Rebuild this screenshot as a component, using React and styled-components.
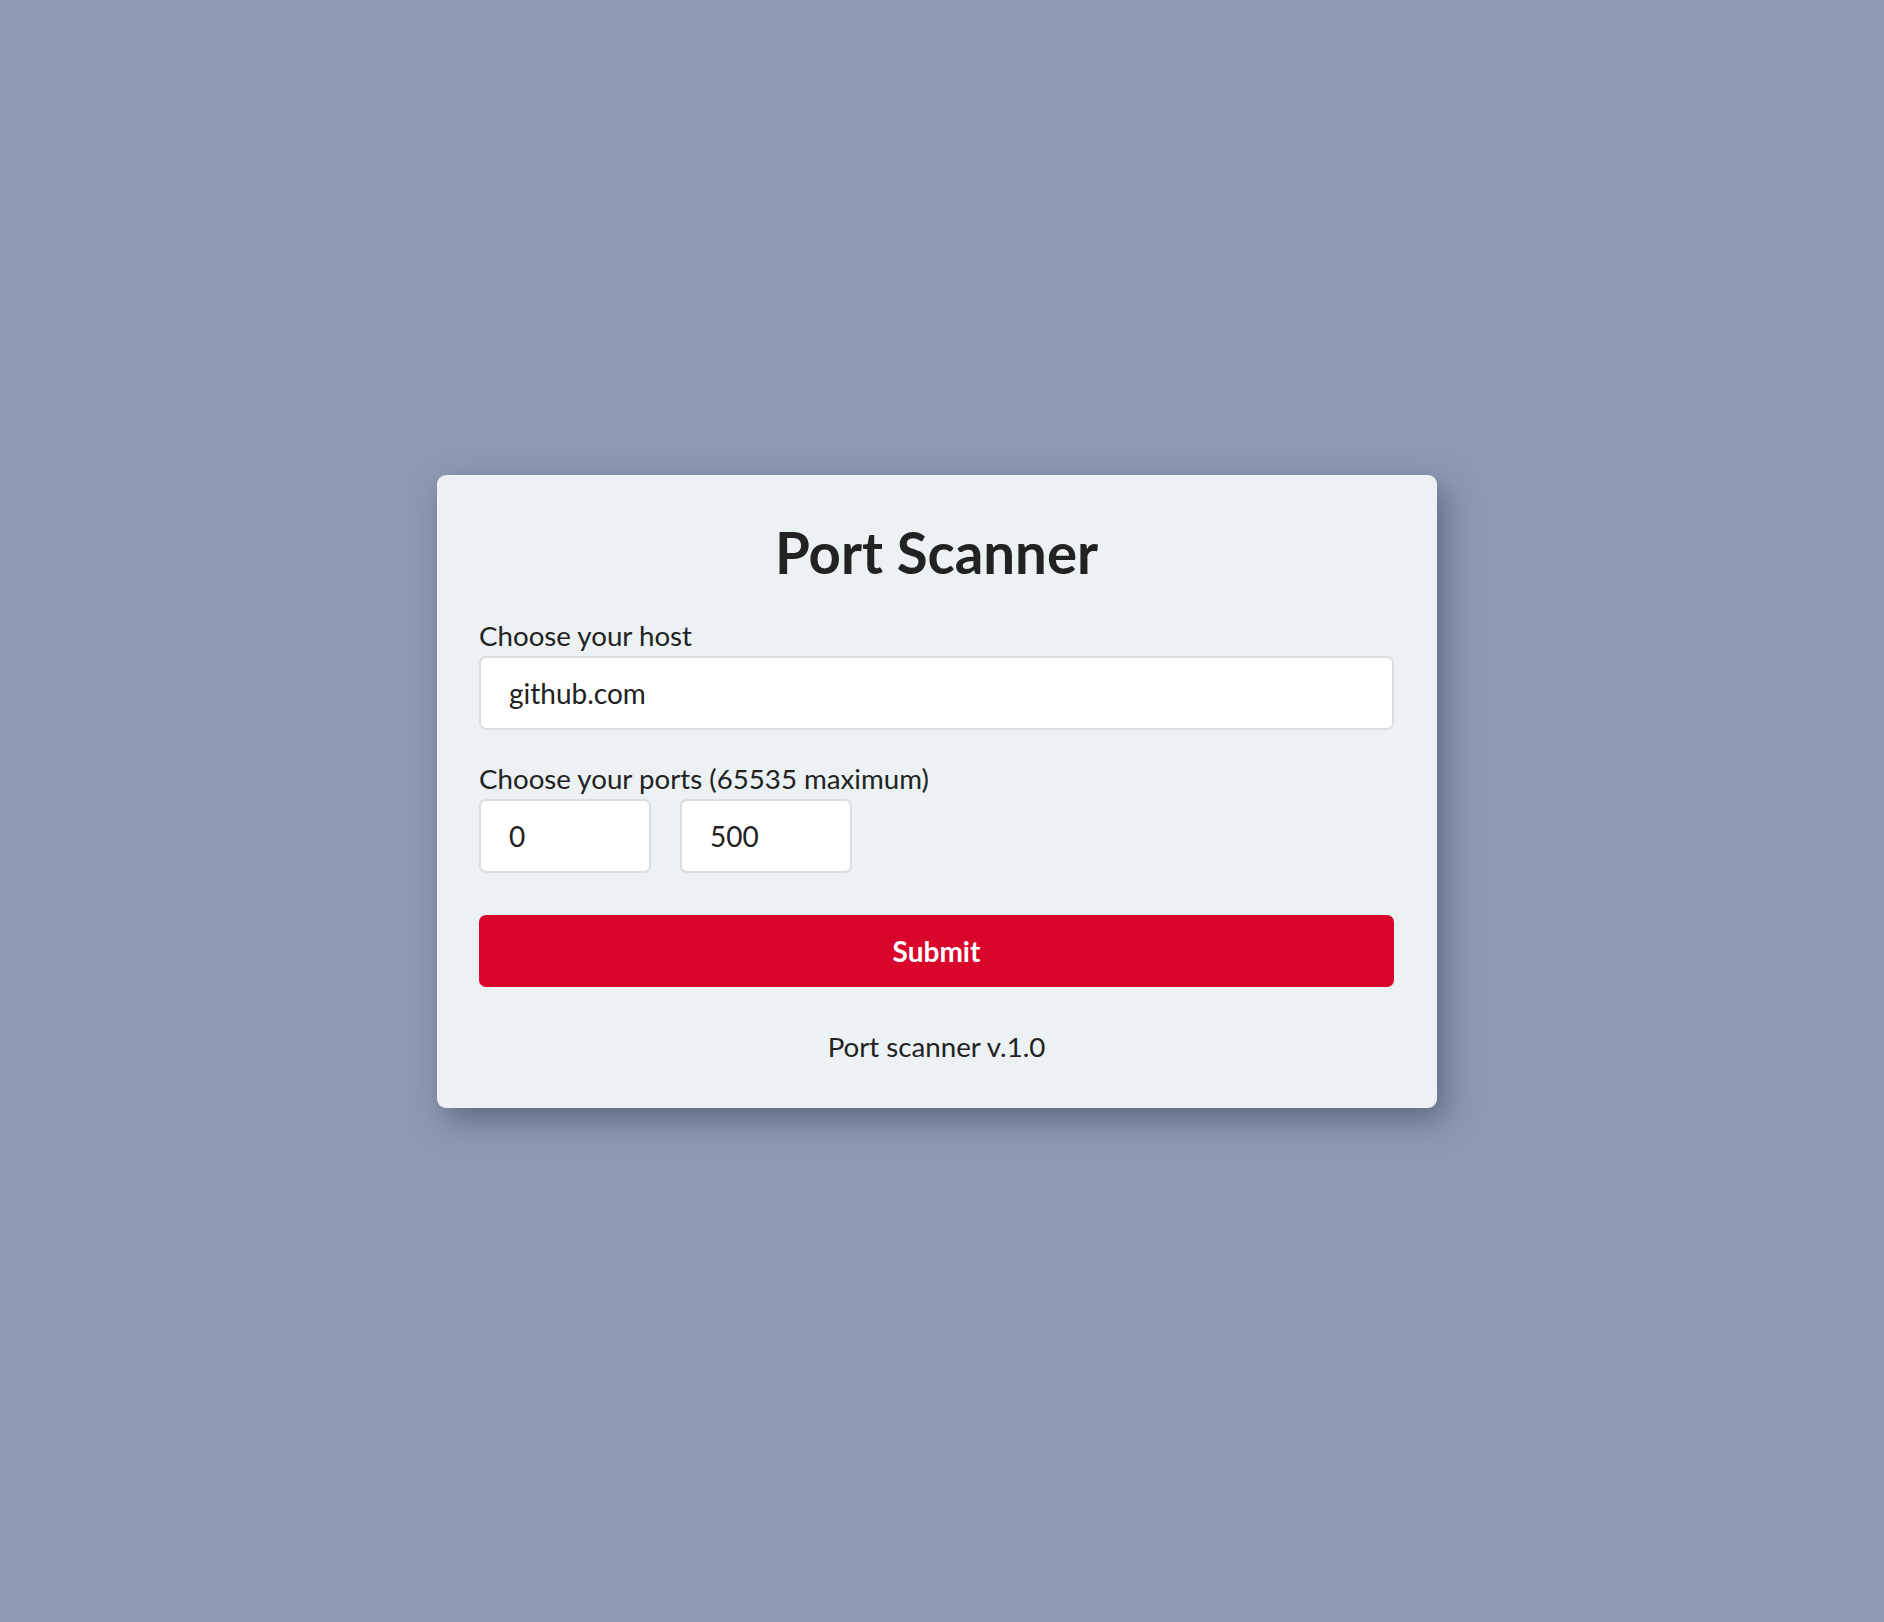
import React from "react";
import styled, { createGlobalStyle } from "styled-components";

const GlobalStyle = createGlobalStyle`
  body {
    margin: 0;
    background-color: #8e9ab1;
    font-family: Lato, "Open Sans", sans-serif;
    color: #222;
  }
`;

const Page = styled.div`
  min-height: 1622px;
  display: flex;
  justify-content: center;
  align-items: flex-start;
  padding: 475px 10px 0 0;
  box-sizing: border-box;
`;

const Card = styled.form`
  width: 1000px;
  box-sizing: border-box;
  padding: 43px 43px 45px 42px;
  background-color: #ecf1f4;
  border-radius: 9px;
  box-shadow: 8px 12px 30px rgba(50, 60, 85, 0.5);
  display: flex;
  flex-direction: column;
`;

const Title = styled.h1`
  margin: 0 0 33px;
  text-align: center;
  font-size: 56.4px;
  font-weight: 700;
  color: #222;
`;

const Label = styled.label`
  display: block;
  font-size: 27.7px;
  margin-bottom: ${(p) => p.gap || 4}px;
`;

const Input = styled.input`
  box-sizing: border-box;
  height: 74px;
  width: ${(p) => p.width || "100%"};
  padding: 0 28px;
  border: 2px solid #dcdde0;
  border-radius: 7px;
  background: #fff;
  font-family: inherit;
  font-size: 28px;
  color: #222;
  outline: none;
`;

const PortRow = styled.div`
  display: flex;
  gap: 29px;
`;

const Field = styled.div`
  margin-bottom: ${(p) => p.space}px;
`;

const Submit = styled.button`
  height: 72px;
  border: none;
  border-radius: 7px;
  background-color: #da052b;
  color: #fff;
  font-family: inherit;
  font-size: 28px;
  font-weight: 700;
  cursor: pointer;
`;

const Footer = styled.p`
  margin: 43px 0 0;
  text-align: center;
  font-size: 27.7px;
`;

function App() {
  return (
    <Page>
      <GlobalStyle />
      <Card onSubmit={(e) => e.preventDefault()}>
        <Title>Port Scanner</Title>

        <Field space={32}>
          <Label htmlFor="host">Choose your host</Label>
          <Input id="host" type="text" defaultValue="github.com" />
        </Field>

        <Field space={42}>
          <Label gap={4}>Choose your ports (65535 maximum)</Label>
          <PortRow>
            <Input type="number" width="172px" defaultValue="0" />
            <Input type="number" width="172px" defaultValue="500" />
          </PortRow>
        </Field>

        <Submit type="submit">Submit</Submit>

        <Footer>Port scanner v.1.0</Footer>
      </Card>
    </Page>
  );
}

export default App;
